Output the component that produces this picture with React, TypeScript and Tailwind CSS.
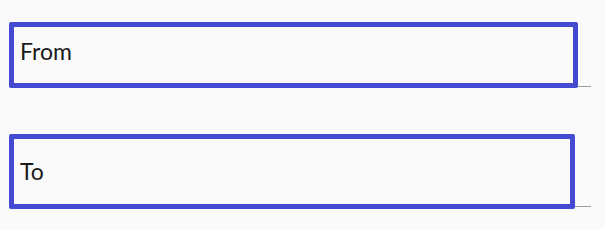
export default function App() {
  return (
    <div className="h-[229px] w-[605px] bg-[#fafafa] pt-[22px] font-['Lato',sans-serif] text-[23px] leading-none text-[#1a1a1a]">
      <div className="ml-[9px] w-[582px] border-b border-[#9e9e9e]">
        <div className="-mb-[2px] h-[66px] w-[569px] rounded-[2px] border-[5px] border-[#4349d0] pl-[6px] pt-[13px]">
          From
        </div>
      </div>
      <div className="ml-[9px] mt-[47px] w-[582px] border-b border-[#9e9e9e]">
        <div className="-mb-[3px] h-[75px] w-[566px] rounded-[2px] border-[5px] border-[#4349d0] pl-[6px] pt-[21px]">
          To
        </div>
      </div>
    </div>
  );
}
